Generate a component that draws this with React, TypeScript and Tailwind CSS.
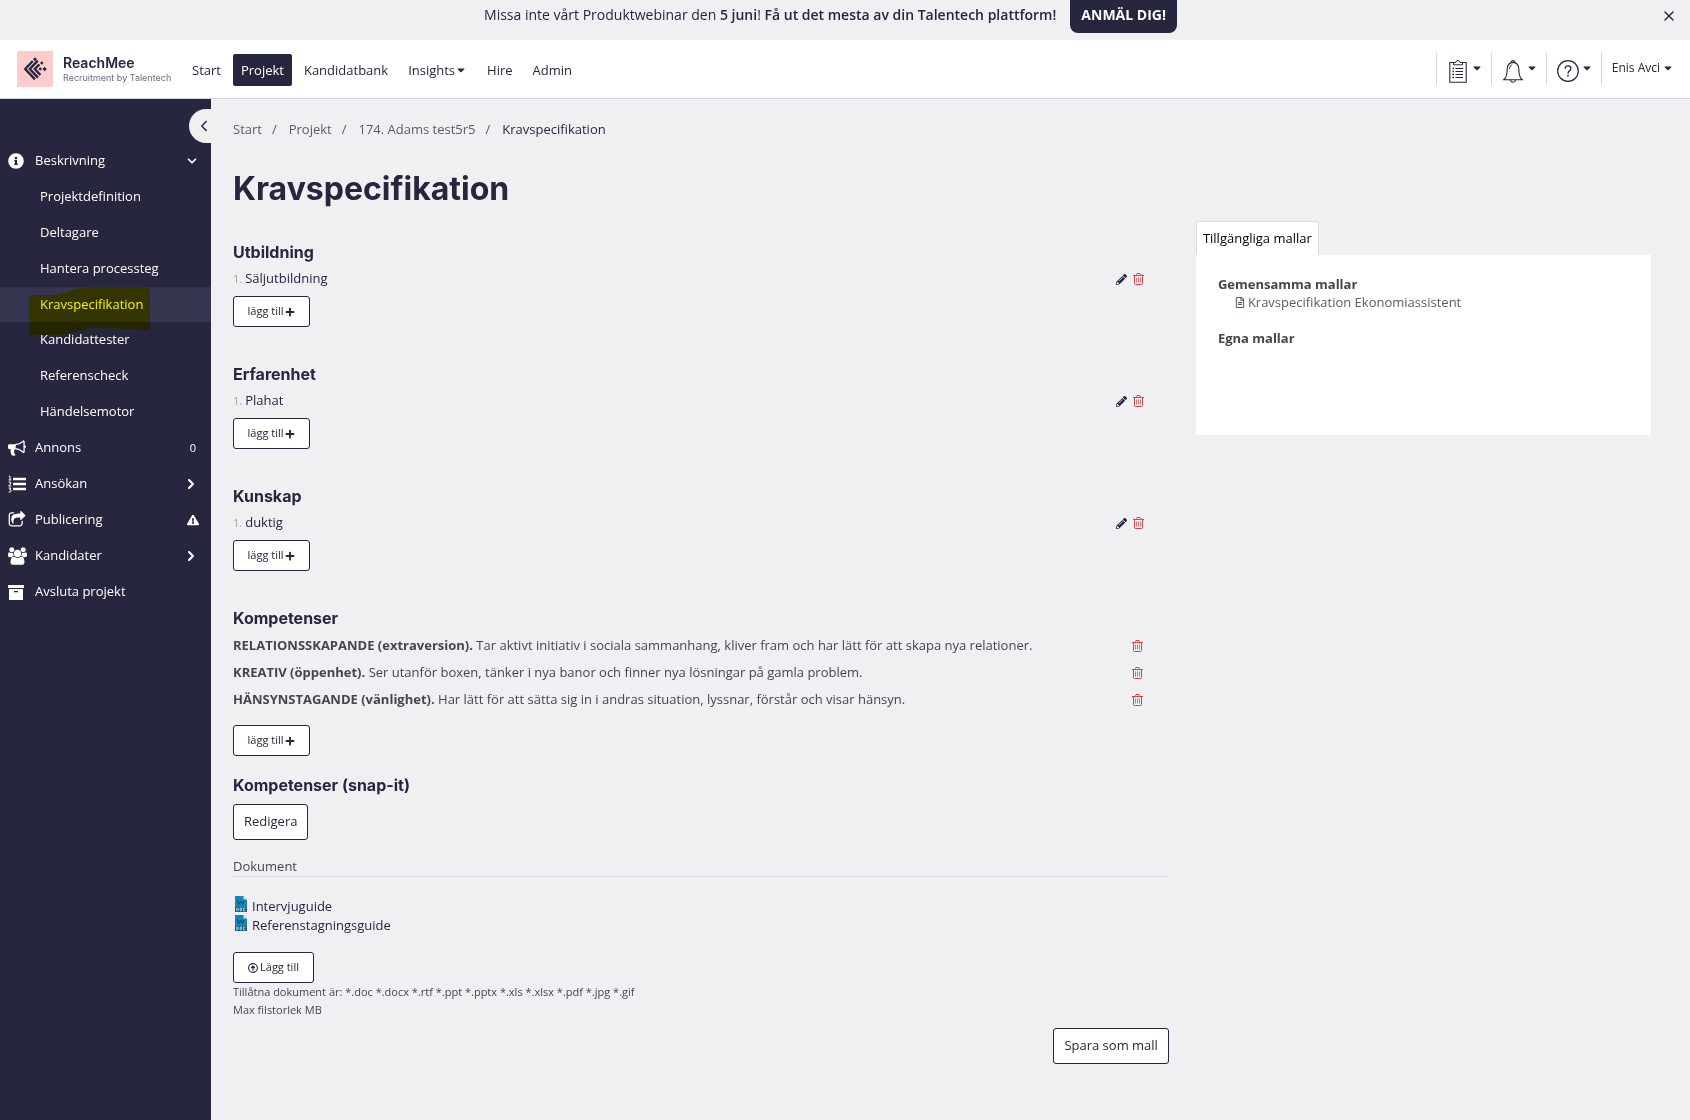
import React from 'react';
import {
  FaCaretDown,
  FaExclamationTriangle,
  FaInfoCircle,
  FaPencilAlt,
  FaPlus,
  FaRegFileAlt
} from 'react-icons/fa';
import { ChevronDown, ChevronLeft, ChevronRight, X } from 'lucide-react';

interface Competence {
  name: string;
  text: string;
}

const subItems = [
  'Projektdefinition',
  'Deltagare',
  'Hantera processteg',
  'Kravspecifikation',
  'Kandidattester',
  'Referenscheck',
  'Händelsemotor'
];

const requirements = [
  { title: 'Utbildning', item: 'Säljutbildning' },
  { title: 'Erfarenhet', item: 'Plahat' },
  { title: 'Kunskap', item: 'duktig' }
];

const competences: Competence[] = [
  {
    name: 'RELATIONSSKAPANDE (extraversion).',
    text: 'Tar aktivt initiativ i sociala sammanhang, kliver fram och har lätt för att skapa nya relationer.'
  },
  {
    name: 'KREATIV (öppenhet).',
    text: 'Ser utanför boxen, tänker i nya banor och finner nya lösningar på gamla problem.'
  },
  {
    name: 'HÄNSYNSTAGANDE (vänlighet).',
    text: 'Har lätt för att sätta sig in i andras situation, lyssnar, förstår och visar hänsyn.'
  }
];

const Logo = () => (
  <svg viewBox="0 0 36 36" className="h-9 w-9 shrink-0" aria-hidden="true">
    <rect width="36" height="36" fill="#ffcccc" />
    <g fill="none" stroke="#26263f" strokeWidth="2.4">
      <path d="M15.8 10 8.2 18l9.8 10.4" />
      <path d="M20.8 9.6 12.8 18l8.2 8.6" />
      <path d="M22.4 13.4 17.8 18l5.6 6" />
    </g>
    <g fill="#26263f">
      <path d="m18 6.2 2 2-2 2-2-2z" />
      <path d="m24.8 10.2 1.8 1.8-1.8 1.8-1.8-1.8z" />
      <path d="m27.6 15.8 2.2 2.2-2.2 2.2-2.2-2.2z" />
      <path d="m23.2 16.200 1.800 1.800-1.800 1.800-1.800-1.800z" />
    </g>
  </svg>
);

const BullhornIcon = () => (
  <svg viewBox="0 0 1792 1792" className="h-[18px] w-[18px]" fill="currentColor" aria-hidden="true">
    <path d="M1664 640q53 0 90.5 37.5t37.5 90.5-37.5 90.5-90.5 37.5v384q0 52-38 90t-90 38q-417-347-812-380-58 19-91 66t-31 100.5 40 92.5q-20 33-23 65.5t6 58 33.5 55 48 50 61.5 50.5q-29 58-111.5 83t-168.5 11.5-132-55.5q-7-23-29.5-87.5t-32-94.5-23-89-15-101 3.5-98.5 22-110.5h-122q-66 0-113-47t-47-113v-192q0-66 47-113t113-47h480q435 0 896-384 52 0 90 38t38 90v384zm-128 604v-954q-394 302-768 343v270q377 42 768 341z" />
  </svg>
);

const ShareIcon = () => (
  <svg viewBox="0 0 1792 1792" className="h-[18px] w-[18px]" fill="currentColor" aria-hidden="true">
    <path d="M1472 989v259q0 119-84.5 203.5t-203.5 84.5h-832q-119 0-203.5-84.5t-84.5-203.5v-832q0-119 84.5-203.5t203.5-84.5h255q13 0 22.5 9.5t9.5 22.5q0 27-26 32-77 26-133 60-10 4-16 4h-112q-66 0-113 47t-47 113v832q0 66 47 113t113 47h832q66 0 113-47t47-113v-214q0-19 18-29 28-13 54-37 16-16 35-8 21 9 21 29zm237-496l-384 384q-18 19-45 19-12 0-25-5-39-17-39-59v-192h-160q-323 0-438 131-119 137-74 473 3 23-20 34-8 2-12 2-16 0-26-13-10-14-21-31t-39.5-68.5-49.5-99.5-38.5-114-17.5-122q0-49 3.5-91t14-90 28-88 47-81.5 68.5-74 94.5-61.5 124.5-48.5 159.5-30.5 196.5-11h160v-192q0-42 39-59 13-5 25-5 26 0 45 19l384 384q19 19 19 45t-19 45z" />
  </svg>
);

const GroupIcon = () => (
  <svg viewBox="0 0 1920 1792" className="h-[18px] w-[19px]" fill="currentColor" aria-hidden="true">
    <path d="M593 896q-162 5-265 128h-134q-82 0-138-40.5t-56-118.5q0-353 124-353 6 0 43.5 21t97.5 42.5 119 21.5q67 0 133-23-5 37-5 66 0 139 81 256zm1071 637q0 120-73 189.5t-194 69.5h-874q-121 0-194-69.5t-73-189.5q0-53 3.5-103.5t14-109 26.5-108.5 43-97.5 62-81 85.5-53.5 111.5-20q10 0 43 21.5t73 48 107 48 135 21.5 135-21.5 107-48 73-48 43-21.5q61 0 111.5 20t85.5 53.5 62 81 43 97.5 26.5 108.5 14 109 3.5 103.5zm-1024-1277q0 106-75 181t-181 75-181-75-75-181 75-181 181-75 181 75 75 181zm704 384q0 159-112.5 271.5t-271.5 112.5-271.5-112.5-112.5-271.5 112.5-271.5 271.5-112.5 271.5 112.5 112.5 271.5zm576 225q0 78-56 118.5t-138 40.5h-134q-103-123-265-128 81-117 81-256 0-29-5-66 66 23 133 23 59 0 119-21.5t97.5-42.5 43.5-21q124 0 124 353zm-128-609q0 106-75 181t-181 75-181-75-75-181 75-181 181-75 181 75 75 181z" />
  </svg>
);

const ListIcon = () => (
  <svg viewBox="0 0 18 18" className="h-[18px] w-[18px]" fill="none" stroke="currentColor" aria-hidden="true">
    <path d="M5 4h13M5 9h13M5 14h13" strokeWidth="2.4" />
    <path d="M.8 1.500 2 1v4M.6 5h2.800M.6 7.200h2v1.800l-2 2h2.800M.6 13h2.200l-1 1.600q1.600 0 1.400 1.300T.6 17" />
  </svg>
);

const ArchiveIcon = () => (
  <svg viewBox="0 0 16 16" className="h-4 w-4" fill="currentColor" aria-hidden="true">
    <path d="M0 1h16v3H0z" />
    <path d="M1 5h14v11H1zm5 2v1.200h4V7z" fillRule="evenodd" />
  </svg>
);

const TrashIcon = () => (
  <svg viewBox="0 0 11 12" className="h-3 w-[11px]" fill="none" stroke="#d0454c" aria-hidden="true">
    <path d="M0 2.5h11M3.5 2.5v-1l.5-1h3l.5 1v1M1.5 2.5v8q0 1 1 1h6q1 0 1-1v-8" />
    <path d="M3.5 4.5v5M5.5 4.5v5M7.5 4.5v5" strokeOpacity="0.75" />
  </svg>
);

const UploadIcon = () => (
  <svg viewBox="0 0 10 10" className="h-[10px] w-[10px]" fill="none" stroke="currentColor" aria-hidden="true">
    <circle cx="5" cy="5" r="4.4" strokeWidth="1.1" />
    <path d="M5 7.5V3.2M3.2 5 5 3.2 6.800 5" strokeWidth="1.2" />
  </svg>
);

const DocIcon = () => (
  <svg viewBox="0 0 12 16" className="h-4 w-3 shrink-0" aria-hidden="true">
    <path d="M0 0h8.5L12 3.5V16H0z" fill="#1686b4" />
    <path d="M8.5 0 12 3.5H8.5z" fill="#d3e6ef" />
    <path d="m2.500 4.500 1.300 4L6 5l1.500 3.500L9.500 4.500" fill="none" stroke="#0b4a6b" />
    <path d="M0 11h12v5H0z" fill="#0f5f85" />
    <g fill="none" stroke="#b9d8e6" strokeWidth="0.9">
      <path d="M1.7 12v2.8h.9l.7-.8v-1.2l-.7-.8z" />
      <path d="M5.1 12h1.5v2.8H5.1z" />
      <path d="M10.4 12H8.6v2.8h1.8" />
    </g>
  </svg>
);

const ClipboardIcon = () => (
  <svg viewBox="0 0 18 23" className="h-[23px] w-[18px]" fill="none" stroke="#26263f" aria-hidden="true">
    <path d="M5 2.5H.8v19.7h16.4V2.5H13" strokeWidth="1.1" />
    <path d="M4.5 4.8V2.5h2.3q0-1.9 2.2-1.9t2.2 1.9h2.3v2.3z" />
    <path d="M3.5 8.5H5M3.5 11.5H5M3.5 14.5H5M3.5 17.5H5" strokeWidth="1.4" />
    <path d="M6.5 8.5H14M6.5 11.5H14M6.5 14.5H14M6.5 17.5H14" />
  </svg>
);

const BellIcon = () => (
  <svg viewBox="0 0 20 23" className="h-[23px] w-5" fill="none" stroke="#26263f" strokeWidth="1.1" aria-hidden="true">
    <path d="M8.3 2.4q0-1.8 1.7-1.8t1.7 1.8" />
    <path d="M10 2.4q-5.6.4-5.8 6.6c0 5-.4 8.6-3.6 10.8h18.8c-3.2-2.2-3.6-5.8-3.6-10.8q-.2-6.2-5.8-6.6z" />
    <path d="M6.3 9q.3-3.600 2.900-4.400" strokeWidth="0.9" />
    <path d="M7.4 20q.4 2.2 2.6 2.2t2.6-2.2" />
  </svg>
);

const HelpIcon = () => (
  <svg viewBox="0 0 22 22" className="h-[22px] w-[22px]" fill="none" stroke="#26263f" aria-hidden="true">
    <circle cx="11" cy="11" r="10.3" strokeWidth="1.2" />
    <path d="M8.2 8.8q0-3 2.9-3 2.8 0 2.8 2.6 0 1.5-1.5 2.5t-1.4 2.7" strokeWidth="1.3" />
    <circle cx="11" cy="15.7" r="0.9" fill="#26263f" stroke="none" />
  </svg>
);

const AddButton = () => (
  <button className="flex h-[31px] w-[77px] items-center justify-center gap-[2px] rounded-[3px] border border-[#26263f] bg-white text-[11px] text-[#26263f]">
    lägg till
    <FaPlus className="h-[10px] w-[10px]" />
  </button>
);

const SectionTitle = ({ children }: { children: React.ReactNode }) => (
  <h2 className="font-['Inter',sans-serif] text-[16px] leading-5 font-bold text-[#26263f]">{children}</h2>
);

const MenuButton = ({ label, children }: { label: string; children: React.ReactNode }) => (
  <button aria-label={label} className="flex h-8 w-[55px] items-start gap-[2px] border-l border-[#d5d5de] pt-[7px] pl-[10px]">
    <span className="flex w-[22px] justify-center">{children}</span>
    <FaCaretDown className="mt-[2px] h-3 w-3" />
  </button>
);

interface SideItemProps {
  icon: React.ReactNode;
  label: string;
  end?: React.ReactNode;
}

const SideItem = ({ icon, label, end }: SideItemProps) => (
  <a href="#" className="flex h-9 items-center pr-3">
    <span className="flex w-[35px] items-center pl-2">{icon}</span>
    <span className="flex-1">{label}</span>
    {end}
  </a>
);

const App: React.FC = () => {
  return (
    <div className="flex min-h-screen flex-col bg-[#f0f0f3] font-['Open_Sans',sans-serif] text-[13px] text-[#26263f]">
      {/* Banner */}
      <div className="flex h-10 items-start">
        <div className="flex flex-1 items-start justify-center gap-[14px]">
          <p className="pt-[5px] text-[14px] leading-5">
            Missa inte vårt Produktwebinar den <b className="font-semibold">5 juni</b>!{' '}
            <b className="font-semibold">Få ut det mesta av din Talentech plattform!</b>
          </p>
          <a href="#" className="flex h-[33px] items-center rounded-b-lg bg-[#26263f] px-[11px] pb-1 text-[14px] font-bold text-white">
            ANMÄL DIG!
          </a>
        </div>
        <button aria-label="Stäng" className="mt-2 mr-[13px]">
          <X className="h-4 w-4" />
        </button>
      </div>

      {/* Header */}
      <header className="flex h-[59px] items-center border-b border-[#d5d5de] bg-white pl-[17px]">
        <Logo />
        <div className="mt-[2px] ml-[10px] w-[112px] font-['Inter',sans-serif] whitespace-nowrap">
          <div className="text-[14px] leading-4 font-semibold">ReachMee</div>
          <div className="text-[9px] leading-[14px] text-[#6d6d7b]">Recruitment by Talentech</div>
        </div>
        <nav className="mt-[2px] ml-[9px] flex items-center gap-1 leading-5">
          <a href="#" className="px-2 py-[6px]">Start</a>
          <a href="#" className="rounded-xs bg-[#26263f] px-2 py-[6px] text-white">Projekt</a>
          <a href="#" className="px-2 py-[6px]">Kandidatbank</a>
          <a href="#" className="flex items-center px-2 py-[6px]">
            Insights
            <FaCaretDown className="h-3 w-3" />
          </a>
          <a href="#" className="px-2 py-[6px]">Hire</a>
          <a href="#" className="px-2 py-[6px]">Admin</a>
        </nav>
        <div className="mr-4 ml-auto flex items-center">
          <MenuButton label="Uppgifter"><ClipboardIcon /></MenuButton>
          <MenuButton label="Aviseringar"><BellIcon /></MenuButton>
          <MenuButton label="Hjälp"><HelpIcon /></MenuButton>
          <button className="flex h-8 items-center gap-[2px] border-l border-[#d5d5de] pb-[2px] pl-[10px] text-[12px]">
            Enis Avci
            <FaCaretDown className="h-3 w-3" />
          </button>
        </div>
      </header>

      <div className="flex flex-1">
        {/* Sidebar */}
        <aside className="w-[211px] shrink-0 bg-[#26263f] text-white">
          <div className="flex h-11 justify-end pt-[10px]">
            <button aria-label="Dölj meny" className="flex h-[34px] w-[22px] items-center justify-center rounded-l-full bg-[#f0f0f3] pl-2 text-[#26263f]">
              <ChevronLeft className="h-[18px] w-[18px] shrink-0" />
            </button>
          </div>
          <SideItem
            icon={<FaInfoCircle className="h-4 w-4" />}
            label="Beskrivning"
            end={<ChevronDown className="h-[14px] w-[14px]" strokeWidth={3} />}
          />
          <ul>
            {subItems.map((item) => (
              <li key={item} className="relative">
                <a
                  href="#"
                  className={`flex items-center pl-10 ${item === 'Kravspecifikation' ? 'h-[35px] bg-[#35354f]' : 'h-9'}`}
                >
                  {item}
                </a>
                {/* Marker stroke over the current page */}
                {item === 'Kravspecifikation' && (
                  <svg
                    viewBox="0 0 121 48"
                    className="pointer-events-none absolute top-0 left-[29px] z-10 h-12 w-[121px] mix-blend-multiply"
                    aria-hidden="true"
                  >
                    <path d="M0 8h26l22-6 10-2h58l5 2v41h-17l-19-2H61l-20 5-10 2H0z" fill="#f7f700" />
                  </svg>
                )}
              </li>
            ))}
          </ul>
          <SideItem icon={<BullhornIcon />} label="Annons" end={<span className="pr-[3px] text-[11px]">0</span>} />
          <SideItem
            icon={<ListIcon />}
            label="Ansökan"
            end={<ChevronRight className="h-4 w-4" strokeWidth={3} />}
          />
          <SideItem
            icon={<ShareIcon />}
            label="Publicering"
            end={<FaExclamationTriangle className="h-3 w-3" />}
          />
          <SideItem
            icon={<GroupIcon />}
            label="Kandidater"
            end={<ChevronRight className="h-4 w-4" strokeWidth={3} />}
          />
          <SideItem icon={<ArchiveIcon />} label="Avsluta projekt" />
        </aside>

        {/* Content */}
        <main className="flex-1 pt-5 pr-[39px] pl-[22px]">
          <nav className="flex leading-5 text-[#5b5b6b]">
            <a href="#">Start</a>
            <span className="mr-3 ml-[10px]">/</span>
            <a href="#">Projekt</a>
            <span className="mr-3 ml-[10px]">/</span>
            <a href="#">174. Adams test5r5</a>
            <span className="mr-3 ml-[10px]">/</span>
            <span className="text-[#26263f]">Kravspecifikation</span>
          </nav>
          <h1 className="mt-[30px] font-['Inter',sans-serif] text-[32px] leading-10 font-bold">Kravspecifikation</h1>

          <div className="mt-3 flex items-start gap-[27px]">
            <div className="w-[66%] pt-[21px]">
              {requirements.map((req) => (
                <section key={req.title} className="mb-[37px]">
                  <SectionTitle>{req.title}</SectionTitle>
                  <div className="mt-[7px] flex h-5 items-center pr-[25px]">
                    <span className="mr-[3px] text-[11px] text-[#a3a3a0]">1.</span>
                    <span className="flex-1">{req.item}</span>
                    <button aria-label="Redigera" className="mr-[6px]">
                      <FaPencilAlt className="h-[11px] w-[11px]" />
                    </button>
                    <button aria-label="Ta bort">
                      <TrashIcon />
                    </button>
                  </div>
                  <div className="mt-[7px]">
                    <AddButton />
                  </div>
                </section>
              ))}

              <section>
                <SectionTitle>Kompetenser</SectionTitle>
                <ul className="mt-1 text-[#45454f]">
                  {competences.map((c) => (
                    <li key={c.name} className="flex h-[27px] items-center pr-[26px]">
                      <span className="flex-1">
                        <b>{c.name}</b> {c.text}
                      </span>
                      <button aria-label="Ta bort">
                        <TrashIcon />
                      </button>
                    </li>
                  ))}
                </ul>
                <div className="mt-3">
                  <AddButton />
                </div>
              </section>

              <section className="mt-[19px]">
                <SectionTitle>Kompetenser (snap-it)</SectionTitle>
                <button className="mt-[9px] h-9 rounded-[3px] border border-[#26263f] bg-white px-[10px]">Redigera</button>
              </section>

              <section className="mt-4">
                <h3 className="border-b border-[#dcdce0] leading-5 text-[#45454f]">Dokument</h3>
                <ul className="mt-[19px]">
                  {['Intervjuguide', 'Referenstagningsguide'].map((doc) => (
                    <li key={doc}>
                      <a href="#" className="flex h-[19px] gap-[5px] pl-[2px] leading-5">
                        <DocIcon />
                        {doc}
                      </a>
                    </li>
                  ))}
                </ul>
                <button className="mt-[18px] flex h-[31px] w-[81px] items-center justify-center gap-[2px] rounded-[3px] border border-[#26263f] bg-white text-[11px]">
                  <UploadIcon />
                  Lägg till
                </button>
                <p className="text-[11px] leading-[18px] text-[#45454f]">
                  Tillåtna dokument är: *.doc *.docx *.rtf *.ppt *.pptx *.xls *.xlsx *.pdf *.jpg *.gif
                  <br />
                  Max filstorlek MB
                </p>
              </section>

              <div className="mt-[9px] flex justify-end">
                <button className="h-9 rounded-[3px] border border-[#26263f] bg-white px-[10px]">Spara som mall</button>
              </div>
            </div>

            {/* Templates */}
            <div className="flex-1">
              <button className="block h-[34px] rounded-t-[3px] border border-b-0 border-[#ddddd5] bg-white px-[6px] text-black">
                Tillgängliga mallar
              </button>
              <div className="min-h-[180px] bg-white px-[22px] pt-5 leading-[18px] text-[#45454f]">
                <b>Gemensamma mallar</b>
                <a href="#" className="flex items-center gap-[3px] pl-[17px] text-[#5b5b6b]">
                  <FaRegFileAlt className="h-[11px] w-[10px]" />
                  Kravspecifikation Ekonomiassistent
                </a>
                <b className="mt-[18px] block">Egna mallar</b>
              </div>
            </div>
          </div>
        </main>
      </div>
    </div>
  );
};

export default App;
